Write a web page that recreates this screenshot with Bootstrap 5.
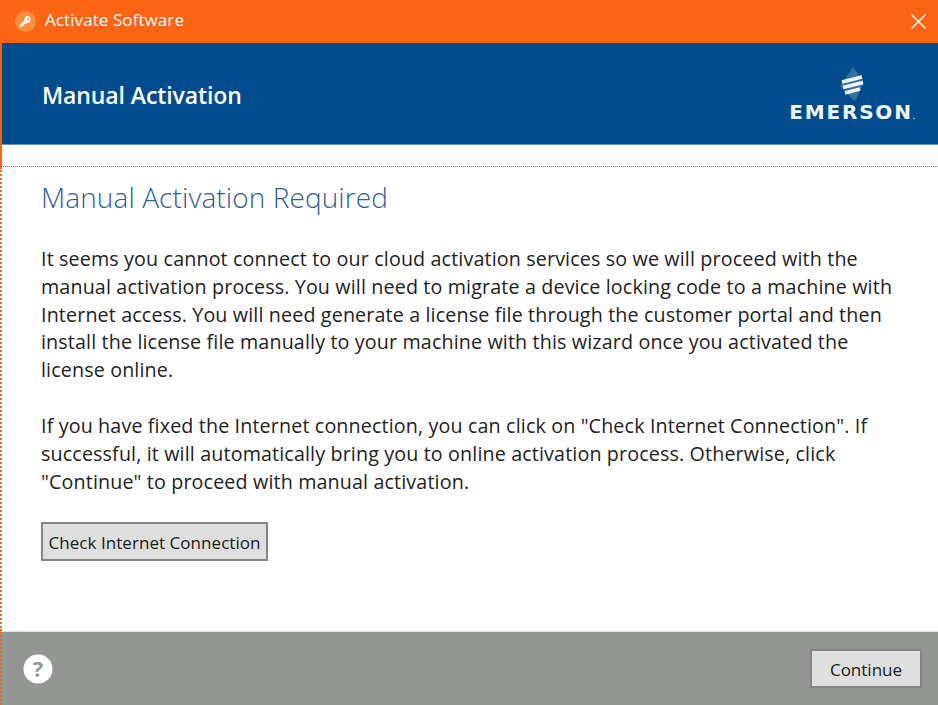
<!DOCTYPE html>
<html lang="en">
<head>
<meta charset="utf-8">
<title>Activate Software</title>
<link href="https://cdn.jsdelivr.net/npm/bootstrap@5.3.0/dist/css/bootstrap.min.css" rel="stylesheet">
<style>
html,body{height:705px;overflow:hidden;background:#fff;}
body{font-family:"Open Sans","Liberation Sans",sans-serif;color:#222;}
.shell{width:938px;height:705px;}
.edge-solid{border-left:2px solid #fb6511;}
.edge-dotted{border-left:2px dotted #fb6511;}
.titlebar{height:43px;background:#fb6511;color:#fff;padding-left:15px;padding-right:11px;font-size:17px;letter-spacing:.08px;}
.key-badge{width:21px;height:21px;border-radius:50%;background:#fc8f3e;}
.title-text{margin-left:9px;padding-bottom:3px;}
.banner{height:102px;background:#004b8d;color:#fff;padding-left:40px;padding-right:23px;border-bottom:1px solid #6f94bb;}
.banner-title{font-size:23px;font-weight:600;letter-spacing:-.1px;margin:4px 0 0;}
.logo-word{font-family:"DejaVu Sans",sans-serif;font-weight:700;font-size:20px;line-height:1;letter-spacing:1.800px;color:#f2f5f8;margin-top:-1px;}
.logo-reg{font-size:6px;letter-spacing:0;}
.gap-strip{height:22px;border-bottom:1px dotted #777;}
.main-pane{height:464px;padding:12px 39px 0;}
.pane-title{font-size:28px;font-weight:300;color:#2f5f96;letter-spacing:.1px;line-height:36px;margin:0 0 30px;}
.pane-text{font-size:19.7px;line-height:27.8px;letter-spacing:.14px;margin:0 0 28px;color:#222;white-space:nowrap;}
.pane-text.last-para{margin-bottom:27px;}
.win-btn{background:#dfdfdf;border:2px solid #858585;border-radius:0;color:#1a1a1a;font-size:17px;line-height:1;padding:2px 0 0;height:39px;}
.win-btn:hover{background:#dfdfdf;border-color:#858585;}
.btn-check-net{width:227px;letter-spacing:.05px;}
.btn-cont{width:112px;}
.foot-bar{height:74px;background:#949694;padding:0 16px 0 21px;border-top:1px solid #ddd;}
</style>
</head>
<body>
<div class="shell d-flex flex-column">
  <div class="titlebar d-flex align-items-center">
    <span class="key-badge d-flex align-items-center justify-content-center">
      <svg width="13" height="13" viewBox="0 0 13 13" aria-hidden="true"><path d="M8.600 1a3.400 3.400 0 0 0-3.200 4.500L1 9.900V12h2.200v-1.400h1.500V9.200h1.400l1-1A3.400 3.400 0 1 0 8.600 1zm.6 2a1 1 0 1 1 0 2 1 1 0 0 1 0-2z" fill="#fff" fill-rule="evenodd"/></svg>
    </span>
    <span class="title-text">Activate Software</span>
    <svg class="ms-auto" width="17" height="17" viewBox="0 0 17 17" aria-hidden="true"><path d="M1.500 1.500l14 14M15.500 1.500l-14 14" stroke="#fff" stroke-width="1.500" fill="none"/></svg>
  </div>
  <div class="banner edge-solid d-flex align-items-center justify-content-between">
    <h1 class="banner-title">Manual Activation</h1>
    <div class="d-flex flex-column align-items-center">
      <svg width="26" height="37" viewBox="0 0 26 37" aria-hidden="true">
        <path d="M14 1L25 16 16 36 1 20z" fill="#fff" opacity=".2"/>
        <g stroke="#f3f6f9" stroke-width="3.400" fill="none"><path d="M3 16l20-5"/><path d="M4 21.500l20-5"/><path d="M6 27l15-4"/></g>
      </svg>
      <div class="logo-word">EMERSON<span class="logo-reg">.</span></div>
    </div>
  </div>
  <div class="gap-strip edge-solid"></div>
  <div class="main-pane edge-dotted">
    <h2 class="pane-title">Manual Activation Required</h2>
    <p class="pane-text">It seems you cannot connect to our cloud activation services so we will proceed with the<br>manual activation process. You will need to migrate a device locking code to a machine with<br>Internet access. You will need generate a license file through the customer portal and then<br>install the license file manually to your machine with this wizard once you activated the<br>license online.</p>
    <p class="pane-text last-para">If you have fixed the Internet connection, you can click on "Check Internet Connection". If<br>successful, it will automatically bring you to online activation process. Otherwise, click<br>"Continue" to proceed with manual activation.</p>
    <button type="button" class="btn win-btn btn-check-net">Check Internet Connection</button>
  </div>
  <div class="foot-bar edge-dotted d-flex align-items-center justify-content-between">
    <svg width="30" height="30" viewBox="0 0 30 30" aria-hidden="true"><circle cx="15" cy="15" r="14.500" fill="#fff"/><text x="15" y="23" text-anchor="middle" font-family="Open Sans, sans-serif" font-weight="700" font-size="22" fill="#949694">?</text></svg>
    <button type="button" class="btn win-btn btn-cont">Continue</button>
  </div>
</div>
<script src="https://cdn.jsdelivr.net/npm/bootstrap@5.3.0/dist/js/bootstrap.bundle.min.js"></script>
</body>
</html>
